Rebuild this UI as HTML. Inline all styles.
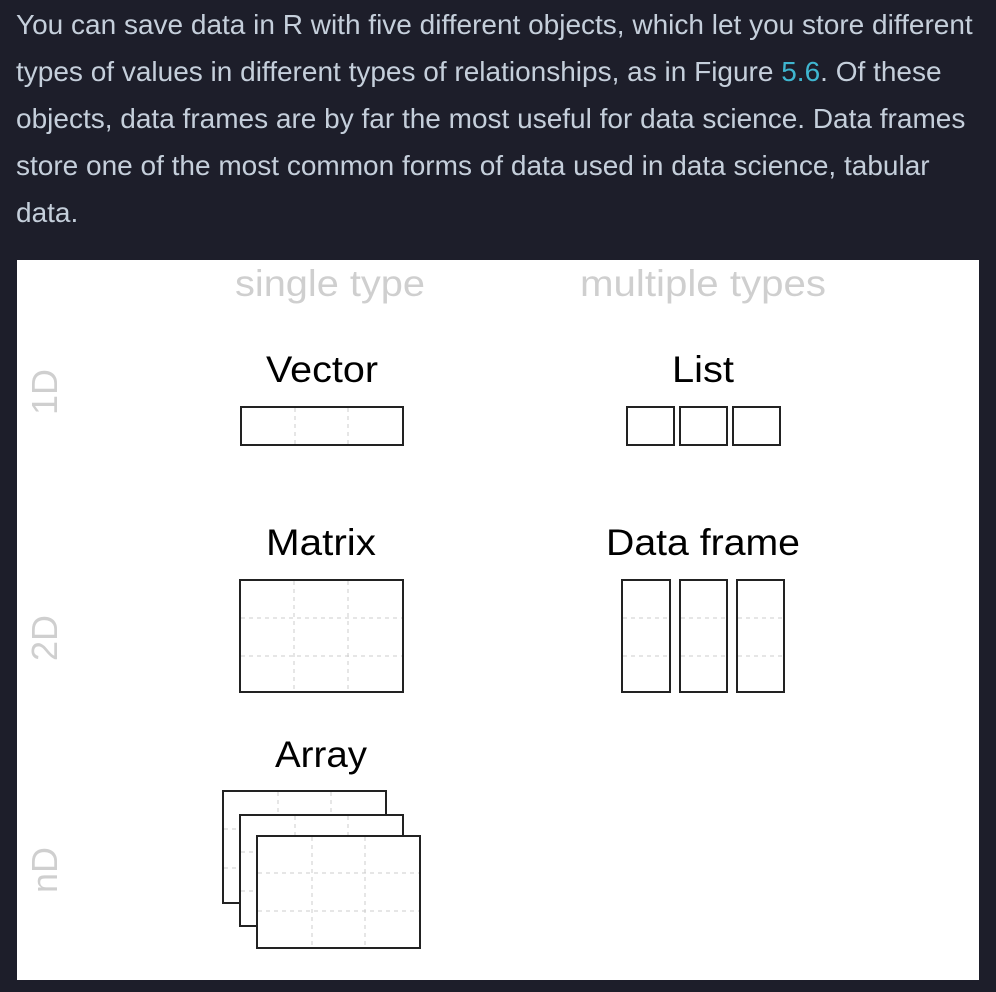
<!DOCTYPE html>
<html><head><meta charset="utf-8"><style>
html,body{margin:0;padding:0;background:#1d1e2a;width:996px;height:992px;overflow:hidden}
p{position:absolute;left:16px;top:0;margin:0;width:990px;white-space:nowrap;font-family:"Liberation Sans",sans-serif;font-size:28px;line-height:47px;color:#c5cfdb;padding-top:1px}
a{color:#3fb6d0;text-decoration:none}
svg{position:absolute;left:0;top:0}
</style></head><body>
<p>You can save data in R with five different objects, which let you store different<br>types of values in different types of relationships, as in Figure <a>5.6</a>. Of these<br>objects, data frames are by far the most useful for data science. Data frames<br>store one of the most common forms of data used in data science, tabular<br>data.</p>
<svg width="996" height="992" viewBox="0 0 996 992" font-family="Liberation Sans, sans-serif">
<rect x="17" y="260" width="962" height="720" fill="#fff"/>
<g fill="#cfcfcf" font-size="37">
<text x="235" y="296" textLength="190" lengthAdjust="spacingAndGlyphs">single type</text>
<text x="580" y="296" textLength="246" lengthAdjust="spacingAndGlyphs">multiple types</text>
</g>
<g fill="#cfcfcf" font-size="36" text-anchor="middle">
<text transform="translate(57,392) rotate(-90)">1D</text>
<text transform="translate(57,638) rotate(-90)">2D</text>
<text transform="translate(57,870) rotate(-90)">nD</text>
</g>
<g fill="#000" font-size="37">
<text x="266" y="382" textLength="112" lengthAdjust="spacingAndGlyphs">Vector</text>
<text x="672" y="382" textLength="62" lengthAdjust="spacingAndGlyphs">List</text>
<text x="266" y="555" textLength="110" lengthAdjust="spacingAndGlyphs">Matrix</text>
<text x="606" y="555" textLength="194" lengthAdjust="spacingAndGlyphs">Data frame</text>
<text x="275" y="767" textLength="92" lengthAdjust="spacingAndGlyphs">Array</text>
</g>
<g fill="#fff" stroke="#222" stroke-width="2">
<rect x="241" y="407" width="162" height="38"/>
<rect x="627" y="407" width="47" height="38"/>
<rect x="680" y="407" width="47" height="38"/>
<rect x="733" y="407" width="47" height="38"/>
<rect x="240" y="580" width="163" height="112"/>
<rect x="622" y="580" width="48" height="112"/>
<rect x="680" y="580" width="47" height="112"/>
<rect x="737" y="580" width="47" height="112"/>
</g>
<g stroke="#ccc" stroke-width="1" stroke-dasharray="4,4" fill="none">
<path d="M295 408V444M348 408V444"/>
<path d="M294 581V691M348 581V691M241 618H402M241 656H402"/>
<path d="M623 618H669M623 656H669M681 618H726M681 656H726M738 618H783M738 656H783"/>
</g>
<g stroke="#222" stroke-width="2" fill="#fff">
<rect x="223" y="791" width="163" height="112"/>
</g>
<g stroke="#ccc" stroke-dasharray="4,4"><path d="M278 792V815M331 792V815M224 829H240M224 868H240"/></g>
<g stroke="#222" stroke-width="2" fill="#fff">
<rect x="240" y="815" width="163" height="111"/>
</g>
<g stroke="#ccc" stroke-dasharray="4,4"><path d="M295 816V836M348 816V836M241 852H257M241 891H257"/></g>
<g stroke="#222" stroke-width="2" fill="#fff">
<rect x="257" y="836" width="163" height="112"/>
</g>
<g stroke="#ccc" stroke-dasharray="4,4"><path d="M312 837V947M365 837V947M258 873H419M258 911H419"/></g>
</svg>
</body></html>
